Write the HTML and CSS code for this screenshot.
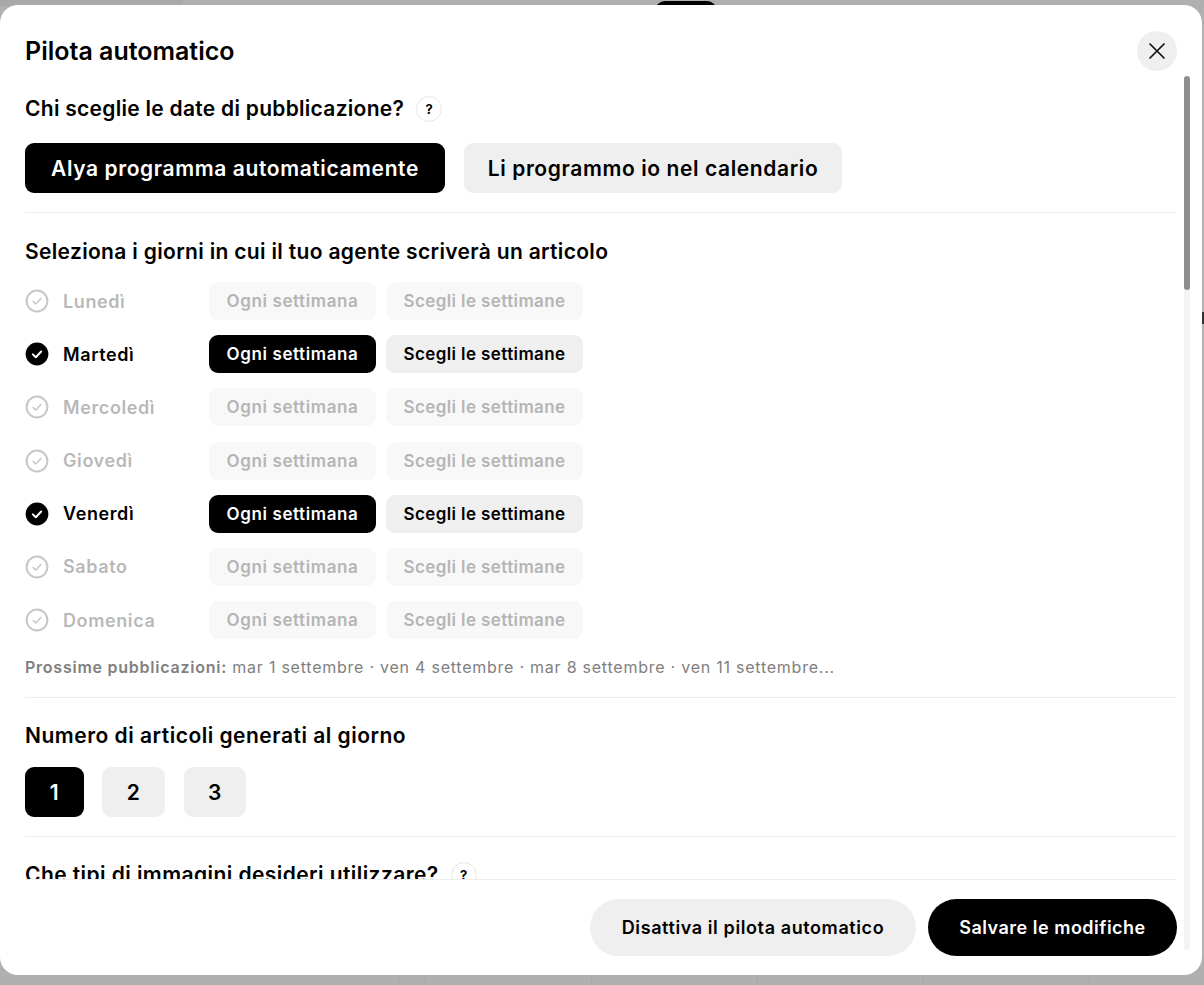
FILE: index.html
```html
<!DOCTYPE html>
<html lang="it">
<head>
<meta charset="utf-8">
<title>Pilota automatico</title>
<link rel="stylesheet" href="styles.css">
</head>
<body>
<div class="backdrop">
  <span class="bg-band"></span>
  <span class="bg-pill"></span>
  <span class="bg-mark"></span>
  <div class="bg-lines"><i class="l1"></i><i class="l2"></i><i class="l3"></i><i class="l3"></i><i class="l3"></i><i class="l3"></i></div>
</div>
<main class="modal">
  <header class="head">
    <h1>Pilota automatico</h1>
    <button class="close" aria-label="Chiudi"><svg width="18" height="18" viewBox="0 0 18 18"><path d="M2 2 16 16M16 2 2 16" stroke="#111" stroke-width="1.7" fill="none" stroke-linecap="round"/></svg></button>
  </header>
  <div class="body">
    <section class="sec sec-a">
      <h2>Chi sceglie le date di pubblicazione? <span class="help">?</span></h2>
      <div class="choice">
        <button class="big on w1">Alya programma automaticamente</button>
        <button class="big w2">Li programmo io nel calendario</button>
      </div>
    </section>
    <section class="sec sec-b">
      <h2>Seleziona i giorni in cui il tuo agente scriverà un articolo</h2>
      <div class="days">
        <div class="day off"><svg class="tick" width="24" height="24" viewBox="0 0 24 24"><circle cx="12" cy="12" r="10.4" fill="none" stroke="#000" stroke-width="2"/><path d="M8.2 12.4l2.7 2.6 5-5.4" fill="none" stroke="#000" stroke-width="1.4" stroke-linecap="round" stroke-linejoin="round"/></svg><span class="name">Lunedì</span><button class="wk on w3">Ogni settimana</button><button class="wk w4">Scegli le settimane</button></div>
        <div class="day"><svg class="tick" width="24" height="24" viewBox="0 0 24 24"><circle cx="12" cy="12" r="11.4" fill="#000"/><path d="M7.8 12.4l3 2.9 5.4-5.8" fill="none" stroke="#fff" stroke-width="2" stroke-linecap="round" stroke-linejoin="round"/></svg><span class="name">Martedì</span><button class="wk on w3">Ogni settimana</button><button class="wk w4">Scegli le settimane</button></div>
        <div class="day off"><svg class="tick" width="24" height="24" viewBox="0 0 24 24"><circle cx="12" cy="12" r="10.4" fill="none" stroke="#000" stroke-width="2"/><path d="M8.2 12.4l2.7 2.6 5-5.4" fill="none" stroke="#000" stroke-width="1.4" stroke-linecap="round" stroke-linejoin="round"/></svg><span class="name">Mercoledì</span><button class="wk on w3">Ogni settimana</button><button class="wk w4">Scegli le settimane</button></div>
        <div class="day off"><svg class="tick" width="24" height="24" viewBox="0 0 24 24"><circle cx="12" cy="12" r="10.4" fill="none" stroke="#000" stroke-width="2"/><path d="M8.2 12.4l2.7 2.6 5-5.4" fill="none" stroke="#000" stroke-width="1.4" stroke-linecap="round" stroke-linejoin="round"/></svg><span class="name">Giovedì</span><button class="wk on w3">Ogni settimana</button><button class="wk w4">Scegli le settimane</button></div>
        <div class="day"><svg class="tick" width="24" height="24" viewBox="0 0 24 24"><circle cx="12" cy="12" r="11.4" fill="#000"/><path d="M7.8 12.4l3 2.9 5.4-5.8" fill="none" stroke="#fff" stroke-width="2" stroke-linecap="round" stroke-linejoin="round"/></svg><span class="name">Venerdì</span><button class="wk on w3">Ogni settimana</button><button class="wk w4">Scegli le settimane</button></div>
        <div class="day off"><svg class="tick" width="24" height="24" viewBox="0 0 24 24"><circle cx="12" cy="12" r="10.4" fill="none" stroke="#000" stroke-width="2"/><path d="M8.2 12.4l2.7 2.6 5-5.4" fill="none" stroke="#000" stroke-width="1.4" stroke-linecap="round" stroke-linejoin="round"/></svg><span class="name">Sabato</span><button class="wk on w3">Ogni settimana</button><button class="wk w4">Scegli le settimane</button></div>
        <div class="day off"><svg class="tick" width="24" height="24" viewBox="0 0 24 24"><circle cx="12" cy="12" r="10.4" fill="none" stroke="#000" stroke-width="2"/><path d="M8.2 12.4l2.7 2.6 5-5.4" fill="none" stroke="#000" stroke-width="1.4" stroke-linecap="round" stroke-linejoin="round"/></svg><span class="name">Domenica</span><button class="wk on w3">Ogni settimana</button><button class="wk w4">Scegli le settimane</button></div>
      </div>
      <p class="next"><b>Prossime pubblicazioni:</b> mar 1 settembre · ven 4 settembre · mar 8 settembre · ven 11 settembre...</p>
    </section>
    <section class="sec sec-c">
      <h2>Numero di articoli generati al giorno</h2>
      <div class="nums">
        <button class="big on n1">1</button>
        <button class="big n2">2</button>
        <button class="big n3">3</button>
      </div>
    </section>
    <section class="sec sec-d">
      <h2>Che tipi di immagini desideri utilizzare? <span class="help">?</span></h2>
    </section>
  </div>
  <footer class="foot">
    <button class="pill grey">Disattiva il pilota automatico</button>
    <button class="pill dark">Salvare le modifiche</button>
  </footer>
  <div class="track"><div class="thumb"></div></div>
</main>
</body>
</html>
```

FILE: styles.css
```css
* { box-sizing: border-box; }
html, body { margin: 0; height: 100%; }
body {
  position: relative;
  height: 985px;
  overflow: hidden;
  background: #b0b0b0;
  font-family: Inter, "Liberation Sans", sans-serif;
  color: #000;
  padding: 5px 2px 10px 0;
}
button { font: inherit; border: 0; color: inherit; padding: 0; }
.backdrop { position: absolute; inset: 0; }
.bg-band { position: absolute; left: 0; top: 0; width: 183px; height: 6px; background: #a9a9a9; }
.bg-pill { position: absolute; left: 655px; top: 1px; width: 62px; height: 20px; border-radius: 16px; background: #000; }
.bg-mark { position: absolute; right: 0; top: 312px; width: 2px; height: 12px; background: #333; }
.bg-lines { position: absolute; left: 398px; bottom: 0; height: 10px; display: flex; }
.bg-lines i { display: block; height: 100%; border-left: 1px solid #a6a6a6; }
.l1 { width: 27px; }
.l2 { width: 166px; }
.l3 { width: 166px; }
.modal {
  position: relative;
  height: 970px;
  background: #fff;
  border-radius: 18px;
  display: flex;
  flex-direction: column;
  padding: 0 25px 0 25px;
  overflow: hidden;
}
.head { height: 71px; display: flex; justify-content: space-between; align-items: flex-start; padding-top: 26px; flex: none; }
h1 { margin: 5px 0 0; font-size: 25px; line-height: 30px; font-weight: 600; letter-spacing: 0; }
.close { width: 40px; height: 40px; border-radius: 50%; background: #efefef; display: flex; align-items: center; justify-content: center; }
.body { height: 804px; overflow: hidden; flex: none; border-bottom: 1px solid #eee; }
h2 { margin: 0; font-size: 21px; line-height: 26px; font-weight: 600; letter-spacing: .33px; display: flex; align-items: center; gap: 12px; height: 26px; }
.sec { border-bottom: 1px solid #eee; }
.sec-a { padding: 20px 0 19px; }
.sec-a h2 { letter-spacing: .28px; }
.help { width: 26px; height: 26px; border-radius: 50%; border: 1px solid #e6e6e6; font-size: 13px; font-weight: 700; display: flex; align-items: center; justify-content: center; letter-spacing: 0; }
.choice { display: flex; gap: 19px; margin-top: 21px; }
.big { height: 50px; border-radius: 9px; background: #efefef; font-size: 21px; font-weight: 600; letter-spacing: .6px; display: block; }
.w1 { width: 420px; }
.w2 { width: 378px; }
.sec-b { padding: 26px 0 20px; }
.days { margin-top: 17px; display: flex; flex-direction: column; gap: 15.2px; }
.day { height: 38px; display: flex; align-items: center; }
.tick { flex: none; }
.name { width: 146px; margin-left: 14px; font-size: 18px; font-weight: 600; letter-spacing: .6px; }
.wk { height: 38px; border-radius: 9px; background: #efefef; font-size: 17px; font-weight: 600; letter-spacing: .45px; margin-right: 10px; }
.w3 { width: 167px; letter-spacing: .6px; }
.w4 { width: 197px; letter-spacing: .4px; }
.on { background: #000; color: #fff; }
.day.off .tick { opacity: .22; }
.day.off .name { opacity: .28; }
.day.off .wk { background: #f8f8f8; color: #b5b5b5; }
.next { margin: 18px 0 0; font-size: 16px; line-height: 20px; color: #808080; letter-spacing: .76px; white-space: nowrap; }
.next b { font-weight: 600; }
.sec-c { padding: 25px 0 19px; }
.sec-c h2 { letter-spacing: .5px; }
.nums { display: flex; gap: 18px; margin-top: 18px; }
.n1 { width: 59px; }
.n2 { width: 63px; margin-right: 1px; }
.n3 { width: 62px; }
.sec-d { padding: 25px 0 0; border: 0; }
.sec-d h2 { letter-spacing: .43px; }
.foot { flex: none; display: flex; justify-content: flex-end; gap: 12px; padding-top: 19px; }
.pill { height: 57px; border-radius: 29px; font-size: 18px; font-weight: 600; letter-spacing: .6px; }
.grey { background: #efefef; width: 326px; }
.dark { background: #000; color: #fff; width: 249px; letter-spacing: .5px; }
.track { position: absolute; right: 12px; top: 71px; bottom: 25px; width: 6px; background: #f3f3f3; border-radius: 3px; }
.thumb { height: 214px; background: #8e8e8e; border-radius: 3px; }
```
